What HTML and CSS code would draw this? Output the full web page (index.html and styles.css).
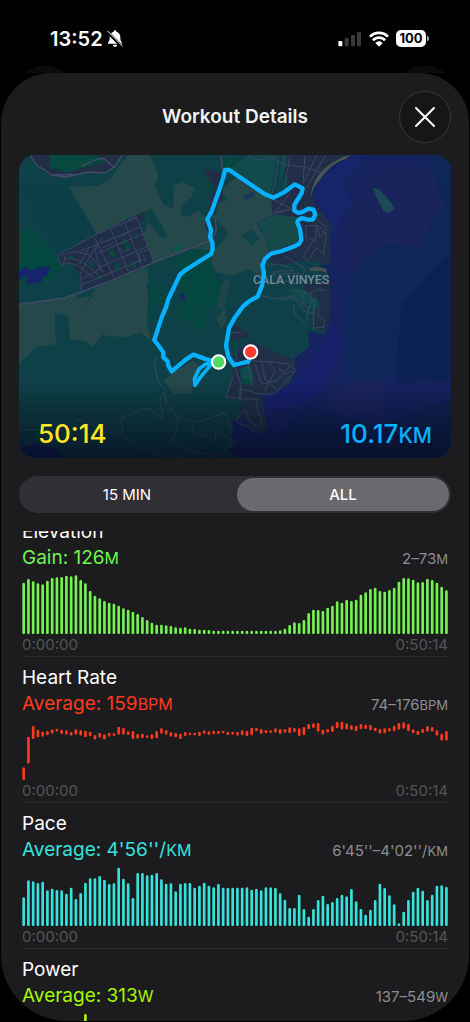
FILE: index.html
```html
<!DOCTYPE html>
<html lang="en">
<head>
<meta charset="utf-8">
<meta name="viewport" content="width=device-width, initial-scale=1">
<title>Workout Details</title>
<link rel="stylesheet" href="styles.css">
</head>
<body>
<div class="statusbar">
  <div class="status-left">
    <span class="clock">13:52</span>
    <svg class="bell" viewBox="0 0 48 51" aria-hidden="true">
      <path fill="#fff" d="M24 1c3 0 4 2 4 4 8 2 12 9 12 17 0 9 1 12 5 16v3H3v-3c4-4 5-7 5-16C8 14 12 7 20 5c0-2 1-4 4-4zM17 44h14c-1 4-4 6-7 6s-6-2-7-6z"/>
      <path stroke="#000" stroke-width="9" d="M-1 3l46 47"/>
      <path stroke="#fff" stroke-width="3" stroke-linecap="round" d="M2 3l44 45"/>
    </svg>
  </div>
  <div class="status-right">
    <svg class="signal" viewBox="0 0 72 48" aria-hidden="true">
      <rect x="1" y="30" width="12" height="16" rx="3" fill="#fff"/>
      <g fill="#3a3a3b"><rect x="20" y="21" width="12" height="25" rx="3"/><rect x="39" y="12" width="12" height="34" rx="3"/><rect x="57" y="3" width="12" height="43" rx="3"/></g>
    </svg>
    <svg class="wifi" viewBox="0 0 60 48" aria-hidden="true">
      <g fill="none" stroke="#fff" stroke-width="8"><path d="M3 17c15-15 39-15 54 0"/><path d="M12 28c10-11 26-11 36 0"/></g>
      <path fill="#fff" d="M19 36c7-7 15-7 22 0L30 47z"/>
    </svg>
    <span class="battery">100</span>
  </div>
</div>

<main class="sheet">
  <header class="head">
    <h1>Workout Details</h1>
    <button class="close" type="button" aria-label="Close">
      <svg viewBox="0 0 22 22" aria-hidden="true"><path d="M2 2l18 18M20 2L2 20"/></svg>
    </button>
  </header>

  <section class="map">
    <svg class="map-art" viewBox="12 13 1296 909" role="img" aria-label="Route map">
      <defs>
        <linearGradient id="fade" x1="0" y1="0" x2="0" y2="1">
          <stop offset="0" stop-color="#04081a" stop-opacity="0"/>
          <stop offset="1" stop-color="#04081a" stop-opacity=".7"/>
        </linearGradient>
      </defs>
      <!-- land -->
      <rect x="12" y="13" width="1296" height="909" fill="#0e4047"/>
      <g fill="#25494a">
        <path d="M310 45L340 13H405L430 75L420 105L445 160L475 175V105L500 95L540 110L530 140L500 165L495 190L520 200L550 180L575 205L585 270L415 335L385 250L400 215L440 260L460 258L410 175L385 185L245 250L160 108L250 105L290 85z"/>
        <path d="M415 340L385 350L400 440L395 520L410 570L375 548L330 560L275 555L265 550L235 588L210 570L165 568L160 495L118 487L123 580L65 590L12 638V462L150 441L180 430L205 470L240 430L300 390z"/>
        <path d="M12 462L150 441L175 430L208 470L240 412L400 350V400L12 480z"/>
        <path d="M500 280L585 272L590 300L540 295z"/>
        <path d="M605 290L640 250L600 200L625 110L665 80L770 145V190L722 215L750 275L765 310L740 345L745 380L700 355L650 375L600 365L585 320z"/>
        <path d="M448 690L475 665L535 630L555 650L535 690L530 728L475 730z"/>
        <path d="M605 505L632 470V510L620 535z"/>
        <path d="M620 400L635 380L645 410L625 480L605 470z" opacity=".6"/>
      </g>
      <g fill="#02493f">
        <path d="M12 240L50 235L85 262L95 290L128 320L135 350L115 385L60 400L12 415z" opacity=".8"/>
        <path d="M460 340L530 298L590 300L585 340L595 365L615 405L605 460L575 475L570 548L530 515L485 500L510 430L490 400L500 365z" opacity=".85"/>
        <path d="M478 280h16v22l-20 2z" fill="#0e564b"/>
        <path d="M400 370L440 430L470 410L450 470L420 460L400 520z" opacity=".6"/>
        <path d="M565 60L590 90L640 150L620 150L585 120z"/>
        <path d="M630 20L665 30L645 52L625 50z"/>
        <path d="M695 13H785L765 145L745 125L645 57z" fill="#12494a"/>
        <path d="M680 255L710 235L735 265L710 282z" fill="#0e4347"/>
        <path d="M725 210L830 178L850 205L855 280L765 305L745 260z" fill="#17484a"/>
      </g>
      <path fill="#0c3d4b" opacity=".5" d="M20 108H160L245 250L130 310L60 220z"/>

      <!-- built up areas -->
      <g fill="#202f47">
        <path d="M45 13h278l-25 38-28 15-50-2-70 14-48-4-32-24z"/>
        <path d="M130 312l115-61 120-58 22-10 4 20-20 16 44 115-120 54-95 36-8-56-20-28-42-4z"/>
        <path d="M565 65L590 55L615 65L620 100L625 150L600 160L580 200L605 235L600 265L585 265L570 225L585 150L595 110z"/>
        <path d="M790 13H1000L940 45L905 85L888 135L920 180L945 225L950 350L905 330L860 330L790 345L765 330L760 305L850 275L855 200L770 190L765 145L830 120z"/>
        <path d="M865 400L945 390V500L925 545L890 530L900 470L870 440z"/>
        <path d="M665 600L705 570L780 605L830 625L843 660L800 720L745 728L735 735L745 790L760 830L740 850L670 820L680 745L640 745L650 680z"/>
        <path d="M655 520L697 545L700 558L650 570z"/>
      </g>
      <g fill="#07483f">
        <path d="M105 13h140l25 20-70 20-45 12-50-15z"/>
        <path d="M675 655l30-15 12 45-38 0z" fill="#0f4b4d"/>
        <path d="M680 683h35v18h-35z"/>
        <path d="M318 268l13-6 5 14-13 6zM280 300l12-6 10 22-12 6zM358 250l10-4 5 14-10 4zM298 338l12-4 6 18-12 5zM345 335l12-5 6 18-12 5zM245 378l16-6 4 10-16 6zM218 335l10-4 8 14-10 4zM160 315l20 0 0 8-20 0zM328 285l14-6 6 12-14 6z"/>
        <path d="M800 13H818L808 60L790 100z" fill="#12494a"/>
        <path d="M820 415l50 0 25 30-25 15-50-15zM880 450l24-12 10 25-20 20z" fill="#0f4b4d"/>
      </g>
      <g fill="#16246b">
        <path d="M12 360l20-10 15 10 28-10 32-2-10 24-16 8v14l-50 8 8-18-10-8-16 12zM492 434l8-6 12 12-4 8-12-4z"/>
        <path d="M692 90l14-8 6 14-12 8zM684 135l30-12 8 8-22 14-14 6z" opacity=".5"/>
      </g>

      <!-- sea -->
      <path fill="#15235f" d="M1010 13L950 45L908 90L892 130L895 155L925 190L950 225L945 340L910 345L935 355L945 390L943 510L928 552L880 540L882 590L835 625L843 660L820 700L800 718L775 735L740 735L748 790L760 830L742 852L705 830L690 805L650 812L655 830L648 855L665 870L645 895L665 922H1308V13z"/>
      <path fill="#11205c" d="M20 890L60 880L110 890L150 922H12z"/>
      <path fill="#17246b" opacity=".8" d="M1010 13L908 90L892 130L950 225V345L975 190L1010 160L985 100L1050 13z"/>
      <path fill="#1a2459" d="M1020 100L1100 40L1240 50L1300 140L1210 290L1120 280L1000 360L985 300z" opacity=".6"/>
      <path fill="#0c2756" opacity=".8" d="M1230 13H1308V690H990L985 440L1040 330L1110 280L1210 288L1290 160z"/>
      <path fill="#0e2254" d="M1160 460L1308 300V690L1140 700z" opacity=".8"/>
      <path fill="#1c245c" opacity=".8" d="M985 690L1108 695L1095 800L1000 775L930 775z"/>
      <path fill="#181f70" opacity=".7" d="M740 735L835 705L890 620L930 555L960 520L985 580L920 720L860 760L760 790z"/>
      <path fill="#0b2350" opacity=".6" d="M820 820L870 765L1090 830L1308 740V922H740z"/>
      <path fill="#4a5554" d="M888 135c0-24 16-60 42-82s55-36 78-40l-16 12c-30 8-54 30-72 54s-30 40-30 56z"/>
      <path fill="#1c4a56" d="M1073 112l20 4 34 38 12 20-18 12-16-4-12-24z"/>
      <path fill="#45504e" d="M884 352l22-4 28 6v12l-18-6-30 2z"/>

      <!-- roads -->
      <g fill="none" stroke="#454b6b" stroke-width="4" stroke-linejoin="round">
        <path d="M45 13l20 30 45 30 45 6 65-15 50 3 30-20 22-34M110 73l65-2M200 46l45-20 20-3 32 26"/>
        <path d="M12 461l140-20 50-18 95-37 118-50 175-68 14-30-3-35-20-20M618 13l5 45"/>
        <g stroke-width="3" stroke="#3c4764">
          <path d="M130 312l115-61 120-50 52 135M138 308l-10 12 5 18 12 4 5-20-6-12M150 310c40-10 60-6 80 10l36 45M145 325c30-3 50 3 68 16l40 35M150 338c25 0 40 4 58 22l30 22M200 422l-4-50 18-38 30-50M192 342l30-48M180 300l20 10M240 262l60 125M262 260l-22 38 16 60M288 238l56 134M330 218l52 133M200 385l55-30M202 402l180-75M252 350l145-62M248 308l140-60M262 292l35-16M256 278l122-50M200 300l50-20M340 210l24-12M312 260l24-12M310 290l16 14 20-10M378 330l-8-22 36-14M392 334l-8-22"/>
          <path d="M700 13l25 15 40-8 45 22 60 8 60 20M790 13l-5 60-17 72M825 20l-17 90M870 13l-6 85M905 13l-40 85M932 13l-58 100M770 145l60 30M780 185l40-50M768 145v40l65-8M830 175l-105 30-4 15 30 55 3 35"/>
          <path d="M895 190l18 25 22 15-5 10-22-15-35 0 0 35 30 12 0-45M908 225l5 35 22-15-10 65-20-20-25 40-15-10 35-60M920 240l15 15M750 345l40-5 40 12 5 8-60 2 0 8 80-2M810 315l60 40-10 30M735 435l50 10 50-10 30 30M820 390l20 30 40 10 30-15 20 5M800 450l35-10 30 40 35 10-5-50M890 430l-15 80M895 480l0 52 30-2 5-20-20-12 0-28M835 460l5 30 35 30M770 370l30 20 50 10M870 420l-10 30 20 25"/>
          <path d="M665 600l0 30-20 10M707 630l75 5 40 5 20 20-45 50-20 20-40 0-62-15-2 30M720 640l20 60 45-10 40-45M740 635l10 50 35 30M760 630l20 30-30 60M790 650l20 20 25-10M700 640l12 65M677 745h50l-2 25 15 40-8 20-30-20-8-30-20 10-8 25 40 15 10 15M660 650l17 50v45l-45-8 25-65M645 545l34 2"/>
          <path d="M430 615l-14 15 12 60 22 30-16 30 10 50-12 0-28-25h-25l-55 25-5 15 5 40 50 40 40-4 20 30 60-6 30 12 80-10M450 730l4 30 34 40 60 15 80-28 20 50M488 800l-2 40-20 35 60 25 80 14 50-34M12 838h130l45-32 110 42 20-8M532 815l0 25 70 30 0-30 40 20 10 20"/>
        </g>
      </g>

      <text class="place" x="714" y="399">CALA VINYES</text>
      <rect x="12" y="690" width="1296" height="232" fill="url(#fade)"/>

      <!-- route -->
      <path class="route" d="M611 634L575 626L535 612L513 626L470 662L460 645L458 632L445 620V605L418 568L440 500L453 470L460 445L495 372L512 358L588 310L593 295L592 275L585 260L588 238L577 205L590 182L612 120L625 80L630 58H643L750 131L776 141L805 126L840 101L863 113L860 127L838 163V180L850 187L865 183L880 174L895 177L901 192L893 207L878 207L860 202L850 208L847 215L855 235L859 268L852 280L835 288L800 301L768 309L750 325L742 345L747 365L741 405L728 438L705 450L685 466L660 500L642 532L633 585L640 618L657 643L700 633L707 604"/>
      <path class="route loop" d="M605 636L572 640L552 655L538 686L540 704L556 680L578 654L590 640"/>
      <circle cx="611" cy="634" r="20" fill="#4ddb62" stroke="#fff" stroke-width="6"/>
      <circle cx="707" cy="604" r="20" fill="#ff3b30" stroke="#fff" stroke-width="6"/>
    </svg>
    <div class="totals">
      <span class="time">50:14</span>
      <span class="distance">10.17<small>KM</small></span>
    </div>
  </section>

  <div class="segments">
    <button type="button" aria-pressed="false">15 MIN</button>
    <button type="button" class="on" aria-pressed="true">ALL</button>
  </div>

  <div class="metrics" id="metrics">
    <section class="metric elevation">
      <h2>Elevation</h2>
      <div class="summary"><span class="value">Gain: 126<small>M</small></span><span class="range">2–73<small>M</small></span></div>
      <svg class="chart" data-series="elevation" viewBox="0 0 1278 177" preserveAspectRatio="none"></svg>
      <div class="times"><span>0:00:00</span><span>0:50:14</span></div>
    </section>
    <section class="metric heart">
      <h2>Heart Rate</h2>
      <div class="summary"><span class="value">Average: 159<small>BPM</small></span><span class="range">74–176<small>BPM</small></span></div>
      <svg class="chart" data-series="heart" viewBox="0 0 1278 177" preserveAspectRatio="none"></svg>
      <div class="times"><span>0:00:00</span><span>0:50:14</span></div>
    </section>
    <section class="metric pace">
      <h2>Pace</h2>
      <div class="summary"><span class="value">Average: 4'56''/<small>KM</small></span><span class="range">6'45''–4'02''/<small>KM</small></span></div>
      <svg class="chart" data-series="pace" viewBox="0 0 1278 177" preserveAspectRatio="none"></svg>
      <div class="times"><span>0:00:00</span><span>0:50:14</span></div>
    </section>
    <section class="metric power">
      <h2>Power</h2>
      <div class="summary"><span class="value">Average: 313<small>W</small></span><span class="range">137–549<small>W</small></span></div>
      <svg class="chart" data-series="power" viewBox="0 0 1278 177" preserveAspectRatio="none"></svg>
    </section>
  </div>
</main>
<script src="charts.js"></script>
</body>
</html>
```
FILE: styles.css
```css
* { box-sizing: border-box; }
body {
  margin: 0;
  height: 100vh;
  display: flex;
  flex-direction: column;
  overflow: hidden;
  background: #000;
  color: #fff;
  font-family: Inter, "Liberation Sans", sans-serif;
}
h1, h2 { margin: 0; font-weight: 400; }
button { border: 0; padding: 0; color: inherit; font: inherit; }
svg { display: block; }

/* status bar */
.statusbar {
  flex: none;
  height: 73px;
  padding: 4px 42px 0 50px;
  display: flex;
  justify-content: space-between;
  align-items: center;
  background:
    radial-gradient(circle at 45px 95px, #0b0b0b 29px, transparent 30px),
    radial-gradient(circle at calc(100% - 45px) 95px, #0b0b0b 29px, transparent 30px);
}
.status-left, .status-right { display: flex; align-items: center; }
.status-left { gap: 4px; }
.status-right { gap: 7px; }
.clock { font-size: 20px; font-weight: 600; line-height: 24px; }
.bell { width: 16px; height: 17px; }
.signal { width: 24px; height: 16px; }
.wifi { width: 20px; height: 16px; }
.battery {
  position: relative;
  width: 30px;
  height: 17px;
  margin-right: 2px;
  border-radius: 5px;
  background: #fff;
  color: #000;
  font-size: 13px;
  font-weight: 700;
  line-height: 17px;
  text-align: center;
}
.battery::after {
  content: "";
  position: absolute;
  left: 31px;
  top: 6px;
  width: 2px;
  height: 5px;
  border-radius: 0 2px 2px 0;
  background: #aaa;
}

/* sheet */
.sheet {
  flex: 1;
  min-height: 0;
  margin: 0 1px 1px;
  display: flex;
  flex-direction: column;
  border-radius: 50px 50px 66px 66px;
  background: #1c1c1e;
}
.head {
  flex: none;
  padding: 18px 18px 12px;
  display: grid;
  grid-template-columns: 52px 1fr 52px;
  align-items: center;
}
.head h1 { grid-column: 2; font-size: 19px; font-weight: 600; line-height: 24px; text-align: center; color: #f2f2f2; }
.close {
  width: 52px;
  height: 52px;
  border: 1px solid #38383a;
  border-radius: 50%;
  background: #161617;
}
.close svg { width: 22px; height: 22px; margin: auto; fill: none; stroke: #fff; stroke-width: 2; stroke-linecap: round; }

/* map */
.map {
  flex: none;
  position: relative;
  margin: 0 18px;
  overflow: hidden;
  border-radius: 16px;
}
.map-art { width: 100%; height: auto; }
.place { fill: #7c8799; font-family: Roboto, sans-serif; font-size: 37px; font-weight: 500; }
.route { fill: none; stroke: #06b1ff; stroke-width: 13; stroke-linejoin: round; stroke-linecap: round; }
.loop { stroke-width: 11; }
.totals {
  position: absolute;
  left: 0;
  right: 0;
  bottom: 0;
  padding: 0 19px 6px;
  display: flex;
  justify-content: space-between;
  font-size: 26px;
  font-weight: 500;
  line-height: 32px;
}
.totals small { font-size: 21px; }
.time { color: #fde724; }
.distance { color: #06b1ff; }

/* segmented control */
.segments {
  flex: none;
  height: 37px;
  margin: 18px;
  padding: 2px;
  display: grid;
  grid-template-columns: 1fr 1fr;
  gap: 4px;
  border-radius: 19px;
  background: #303034;
}
.segments button {
  border-radius: 17px;
  background: none;
  font-size: 15px;
}
.segments .on { background: #69696e; font-weight: 500; }

/* metrics */
.metrics {
  flex: 1;
  min-height: 0;
  padding: 0 21px;
  overflow-y: auto;
  scrollbar-width: none;
}
.metric { padding-top: 8px; border-bottom: 1px solid #2c2c2e; }
.metric h2 { font-size: 19px; line-height: 26px; }
.summary { display: flex; justify-content: space-between; align-items: baseline; height: 26px; line-height: 26px; }
.value { font-size: 19px; }
.value small { font-size: 16px; }
.range { font-size: 15px; color: #8d8d92; }
.range small { font-size: 13px; }
.chart { width: 100%; height: 59px; margin-top: 4px; fill: none; stroke: currentColor; stroke-width: 8; stroke-linecap: round; }
.times { display: flex; justify-content: space-between; font-size: 15px; line-height: 22px; color: #545457; }

.elevation .value, .elevation .chart { color: #74f352; }
.heart .value, .heart .chart { color: #fc3b1c; }
.pace .value, .pace .chart { color: #35e3dc; }
.power .value, .power .chart { color: #a5f800; }
```
FILE: charts.js
```js
// plain numbers are bars from the baseline, pairs are [top, bottom] spans
var BASE = 177;
var series = {
  elevation: [
    154,165,158,152,149,160,168,170,171,175,173,176,162,152,129,115,107,99,94,91,85,77,73,67,60,51,42,34,28,28,
    26,24,20,19,20,16,15,13,13,12,10,10,10,10,10,10,10,10,10,10,10,10,10,10,11,16,27,35,33,42,
    63,73,72,69,79,85,98,94,103,99,103,118,125,135,139,129,127,132,139,157,168,167,163,155,156,166,162,154,142,131
  ],
  heart: [
    [139,177],[47,128],[15,54],[26,49],[32,47],[30,43],[25,38],[23,32],[26,39],[28,41],
    [33,44],[25,41],[27,44],[29,49],[32,46],[42,56],[36,50],[40,56],[35,47],[37,45],
    [17,41],[21,41],[31,42],[30,54],[39,53],[38,52],[43,51],[40,54],[30,52],[22,38],
    [27,41],[34,47],[36,49],[38,54],[33,45],[35,43],[35,43],[32,45],[28,39],[31,42],
    [29,40],[29,39],[29,37],[32,42],[32,41],[33,44],[28,43],[29,46],[20,43],[21,31],
    [24,39],[27,37],[28,36],[22,35],[24,39],[24,35],[19,37],[21,33],[22,45],[18,43],
    [9,25],[7,21],[6,32],[26,41],[24,35],[14,33],[2,22],[2,26],[7,25],[13,27],
    [14,31],[9,24],[11,24],[11,28],[20,31],[24,38],[22,37],[21,32],[14,31],[6,26],
    [4,23],[8,31],[25,37],[29,42],[24,36],[15,32],[18,32],[28,44],[38,59],[30,59]
  ],
  pace: [
    86,137,134,129,133,107,112,108,107,97,115,81,99,130,143,143,150,139,126,128,175,142,128,84,159,159,152,154,159,140,
    127,128,104,127,129,129,115,121,130,121,116,126,115,115,115,115,115,116,109,112,107,116,116,115,98,79,54,54,94,51,
    28,51,78,91,66,72,84,94,89,111,74,51,34,49,78,127,114,92,65,8,43,78,103,115,106,78,94,121,122,117
  ],
  power: [60,90,92,95,90,88,96,94,90,91,88,97,102,174,110,104,98,96,94,92,90,93,95,92]
};

document.querySelectorAll('.chart').forEach(function (svg) {
  var d = '';
  series[svg.dataset.series].forEach(function (v, i) {
    var x = 5 + i * 14.25;
    var top = Array.isArray(v) ? v[0] : BASE - v;
    var bottom = Array.isArray(v) ? v[1] : BASE;
    d += 'M' + x + ' ' + (top + 4) + 'V' + (bottom - 3.9);
  });
  var path = document.createElementNS('http://www.w3.org/2000/svg', 'path');
  path.setAttribute('d', d);
  svg.appendChild(path);
});

document.getElementById('metrics').scrollTop = 20;
```
